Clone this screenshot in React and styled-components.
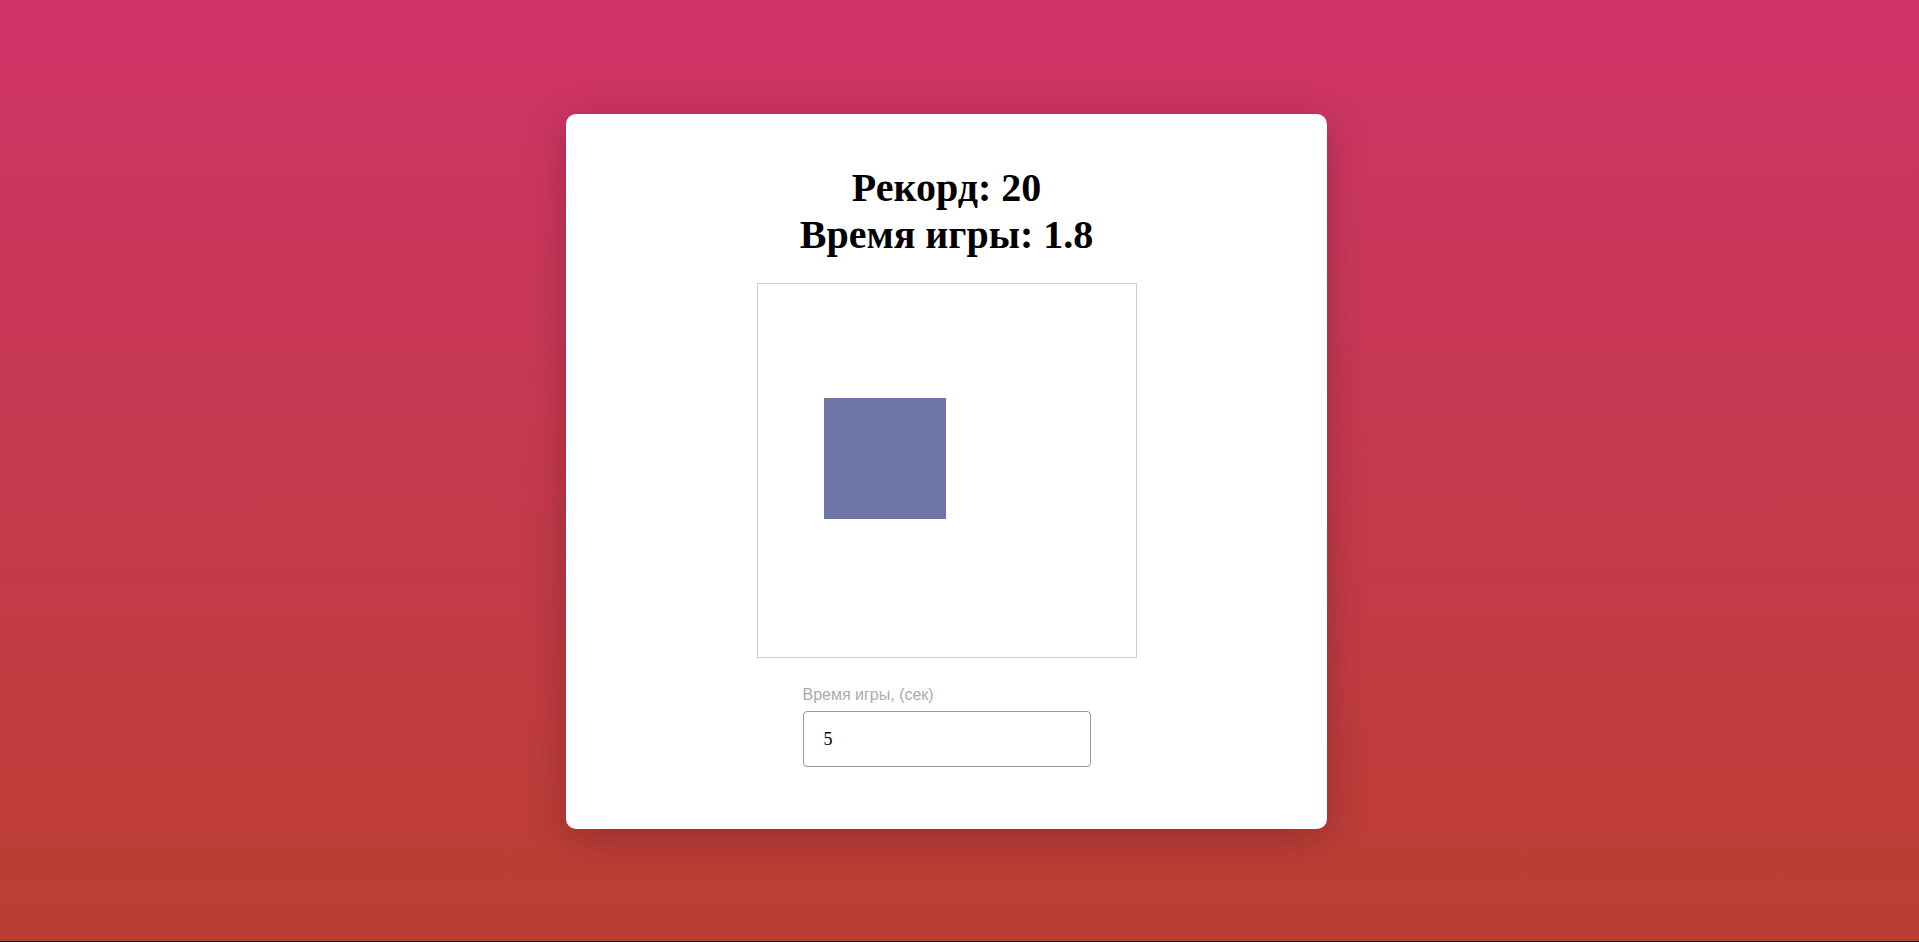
import React, { useState } from "react";
import styled, { createGlobalStyle } from "styled-components";

const GlobalStyle = createGlobalStyle`
  html, body {
    margin: 0;
    padding: 0;
    background: #1d1a1a;
  }
`;

const Page = styled.div`
  min-height: calc(100vh - 1px);
  display: flex;
  align-items: center;
  justify-content: center;
  padding: 2px 26px 0 0;
  box-sizing: border-box;
  background: linear-gradient(to bottom, #cf3469, #bb3e31);
  font-family: "Liberation Serif", "Times New Roman", serif;
`;

const Card = styled.div`
  width: 761px;
  height: 715px;
  box-sizing: border-box;
  padding-top: 50px;
  background-color: #fff;
  border-radius: 10px;
  box-shadow: 0 8px 40px rgba(0, 0, 0, 0.22);
  display: flex;
  flex-direction: column;
  align-items: center;
`;

const Title = styled.h1`
  margin: 0;
  font-size: 40px;
  font-weight: 700;
  line-height: 47px;
  text-align: center;
  color: #000;
`;

const Field = styled.div`
  position: relative;
  margin-top: 25px;
  width: 380px;
  height: 375px;
  box-sizing: border-box;
  border: 1px solid #cccccc;
`;

const Box = styled.div`
  position: absolute;
  width: 122px;
  height: 121px;
  background-color: #6f75a8;
  cursor: pointer;
`;

const InputGroup = styled.label`
  margin-top: 28px;
  display: flex;
  flex-direction: column;
  width: 288px;
`;

const Label = styled.span`
  font-family: "Liberation Sans", Arial, sans-serif;
  font-size: 16px;
  line-height: 18px;
  color: #acacac;
  margin-bottom: 7px;
`;

const Input = styled.input`
  width: 100%;
  height: 56px;
  box-sizing: border-box;
  padding: 0 20px;
  border: 1px solid #999;
  border-radius: 4px;
  font-family: "Liberation Serif", "Times New Roman", serif;
  font-size: 18px;
  color: #000;
  outline: none;
`;

export default function App() {
  const [time, setTime] = useState("5");
  return (
    <>
      <GlobalStyle />
      <Page>
        <Card>
          <Title>
            Рекорд: 20
            <br />
            Время игры: 1.8
          </Title>
          <Field>
            <Box style={{ left: 66, top: 114 }} />
          </Field>
          <InputGroup>
            <Label>Время игры, (сек)</Label>
            <Input
              type="number"
              value={time}
              onChange={(e) => setTime(e.target.value)}
            />
          </InputGroup>
        </Card>
      </Page>
    </>
  );
}
